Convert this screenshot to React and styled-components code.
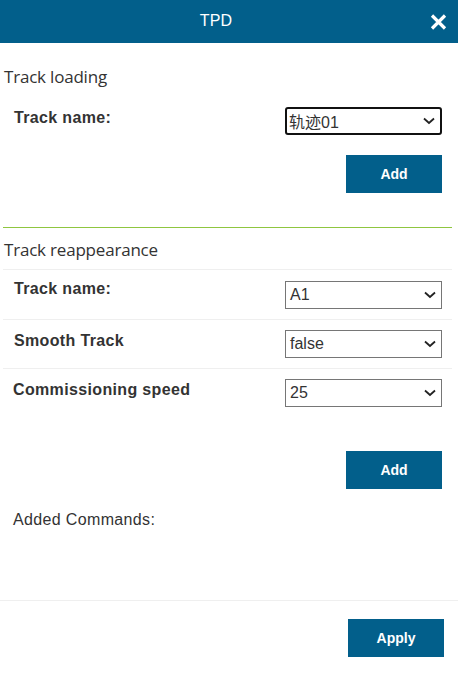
import React from "react";
import styled, { createGlobalStyle } from "styled-components";

const Global = createGlobalStyle`
  html, body { margin: 0; padding: 0; background: #fff; }
  body { font-family: "Liberation Sans", Arial, "Noto Sans CJK SC", sans-serif; color: #333; }
  * { box-sizing: border-box; }
`;

const Panel = styled.div`
  width: 458px;
  height: 673px;
  display: flex;
  flex-direction: column;
  background: #fff;
`;

const Header = styled.div`
  height: 43px;
  background: #025f8b;
  display: flex;
  align-items: center;
  color: #fff;
`;

const Title = styled.div`
  flex: 1;
  text-align: center;
  font-family: "Liberation Sans", Arial, sans-serif;
  font-size: 16px;
  line-height: 20px;
  padding: 0 0 1px 4px;
  letter-spacing: 0.2px;
`;

const Close = styled.button`
  width: 20px;
  height: 43px;
  margin-right: 10px;
  border: none;
  background: transparent;
  padding: 0;
  display: flex;
  align-items: center;
  justify-content: center;
  cursor: pointer;
`;

const Body = styled.div`
  padding: 0 6px 0 3px;
  display: flex;
  flex-direction: column;
`;

const SectionTitle = styled.div`
  font-family: "Open Sans", "Segoe UI", sans-serif;
  font-size: 17px;
  line-height: 22px;
  color: #333;
  padding-left: 1px;
  margin-top: ${(p) => p.$top}px;
  letter-spacing: -0.2px;
`;

const Row = styled.div`
  display: flex;
  justify-content: space-between;
  align-items: flex-start;
  padding: ${(p) => p.$pt}px 10px ${(p) => p.$pb}px ${(p) => p.$pl}px;
  margin-top: ${(p) => p.$mt || 0}px;
  border-top: ${(p) => (p.$line ? "1px solid #efefef" : "none")};
`;

const Label = styled.div`
  font-weight: bold;
  font-size: 16px;
  line-height: 16px;
  letter-spacing: 0.35px;
  color: #333;
  margin-top: ${(p) => p.$top}px;
`;

const SelectBox = styled.div`
  width: 157px;
  height: 28px;
  border: ${(p) => (p.$focus ? "2px solid #111" : "1px solid #767676")};
  border-radius: ${(p) => (p.$focus ? "3px" : "0")};
  display: flex;
  align-items: center;
  justify-content: space-between;
  padding: 0 5px 0 ${(p) => (p.$focus ? 2 : 4)}px;
  font-size: 16px;
  color: #333;
  background: #fff;
`;

const ButtonRow = styled.div`
  display: flex;
  justify-content: flex-end;
  padding-right: ${(p) => p.$pr}px;
  margin-top: ${(p) => p.$top}px;
`;

const Button = styled.button`
  width: 96px;
  height: 38px;
  border: none;
  background: #025f8b;
  color: #fff;
  font-family: "Liberation Sans", Arial, sans-serif;
  font-weight: bold;
  font-size: 14px;
  cursor: pointer;
`;

const Divider = styled.div`
  height: 1px;
  background: #8fc640;
  margin-top: ${(p) => p.$top}px;
`;

const Commands = styled.div`
  font-size: 16px;
  line-height: 18px;
  letter-spacing: 0.35px;
  color: #333;
  padding-left: 10px;
  margin-top: ${(p) => p.$top}px;
  height: 89px;
`;

const Footer = styled.div`
  border-top: 1px solid #efefef;
  display: flex;
  justify-content: flex-end;
  padding: 18px 14px 0 0;
`;

const Chevron = () => (
  <svg width="12" height="8" viewBox="0 0 12 8">
    <path d="M1 1.5 L6 6 L11 1.5" fill="none" stroke="#222" strokeWidth="1.8" />
  </svg>
);

const Select = ({ value, focus }) => (
  <SelectBox $focus={focus}>
    <span>{value}</span>
    <Chevron />
  </SelectBox>
);

export default function App() {
  return (
    <>
      <Global />
      <Panel>
        <Header>
          <Title>TPD</Title>
          <Close aria-label="close">
            <svg width="17" height="16" viewBox="0 0 17 16">
              <path d="M2 1.5 L15 14.5 M15 1.5 L2 14.5" stroke="#fff" strokeWidth="3.2" />
            </svg>
          </Close>
        </Header>
        <Body>
          <SectionTitle $top={23}>Track loading</SectionTitle>
          <Row $pt={19} $pb={0} $pl={11}>
            <Label $top={3}>Track name:</Label>
            <Select value="轨迹01" focus />
          </Row>
          <ButtonRow $pr={10} $top={20}>
            <Button>Add</Button>
          </ButtonRow>
          <Divider $top={34} />
          <SectionTitle $top={11}>Track reappearance</SectionTitle>
          <Row $line $pt={11} $pb={10} $pl={11} $mt={8}>
            <Label $top={0}>Track name:</Label>
            <Select value="A1" />
          </Row>
          <Row $line $pt={10} $pb={10} $pl={11}>
            <Label $top={3}>Smooth Track</Label>
            <Select value="false" />
          </Row>
          <Row $line $pt={10} $pb={10} $pl={10}>
            <Label $top={3}>Commissioning speed</Label>
            <Select value="25" />
          </Row>
          <ButtonRow $pr={10} $top={34}>
            <Button>Add</Button>
          </ButtonRow>
          <Commands $top={22}>Added Commands:</Commands>
        </Body>
        <Footer>
          <Button>Apply</Button>
        </Footer>
      </Panel>
    </>
  );
}
